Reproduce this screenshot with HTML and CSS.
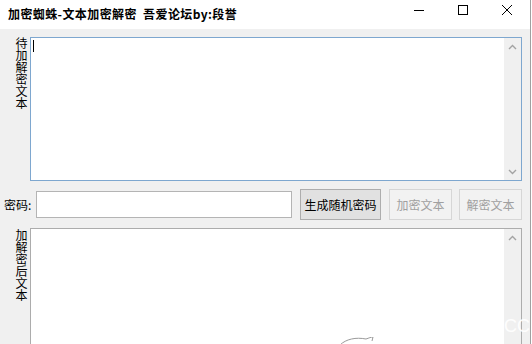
FILE: index.html
```html
<!DOCTYPE html>
<html lang="zh">
<head>
<meta charset="utf-8">
<title>加密蜘蛛</title>
<link rel="stylesheet" href="styles.css">
</head>
<body>
<div class="window">
  <div class="titlebar">
    <div class="title">加密蜘蛛-文本加密解密&nbsp;&nbsp;吾爱论坛by:段誉</div>
    <div class="caps">
      <div class="cap"><svg width="10" height="10" viewBox="0 0 10 10"><path d="M0 5.5H10" stroke="#000" stroke-width="1"/></svg></div>
      <div class="cap"><svg width="10" height="10" viewBox="0 0 10 10"><rect x="0.5" y="0.5" width="9" height="9" fill="none" stroke="#000" stroke-width="1"/></svg></div>
      <div class="cap"><svg width="10" height="10" viewBox="0 0 10 10"><path d="M0 0L10 10M10 0L0 10" stroke="#000" stroke-width="1"/></svg></div>
    </div>
  </div>
  <div class="client">
    <div class="pane pane-top">
      <div class="vlabel">待加解密文本</div>
      <div class="textbox focused">
        <div class="text-area"><span class="caret"></span></div>
        <div class="scrollbar">
          <div class="arrow"><svg width="9" height="6" viewBox="0 0 9 6"><path d="M1 5L4.5 1.5L8 5" fill="none" stroke="#a3a3a3" stroke-width="1.4"/></svg></div>
          <div class="track"></div>
          <div class="arrow"><svg width="9" height="6" viewBox="0 0 9 6"><path d="M1 1L4.5 4.5L8 1" fill="none" stroke="#a3a3a3" stroke-width="1.4"/></svg></div>
        </div>
      </div>
    </div>
    <div class="pwd-row">
      <div class="pwd-label">密码:</div>
      <div class="input"></div>
      <div class="btn btn-main">生成随机密码</div>
      <div class="btn btn-off btn-enc">加密文本</div>
      <div class="btn btn-off">解密文本</div>
    </div>
    <div class="pane pane-bottom">
      <div class="vlabel">加解密后文本</div>
      <div class="textbox plain">
        <div class="text-area"></div>
        <div class="scrollbar">
          <div class="arrow"><svg width="9" height="6" viewBox="0 0 9 6"><path d="M1 5L4.5 1.5L8 5" fill="none" stroke="#a3a3a3" stroke-width="1.4"/></svg></div>
          <div class="track"></div>
        </div>
      </div>
    </div>
  </div>
</div>
<div class="wm-text">CC</div>
<svg class="wm-logo" width="40" height="8" viewBox="0 0 40 8"><path d="M2 8C8 2 18 0 28 2C31 1 33 0 35 0L34 4" fill="none" stroke="#9a9a9a" stroke-width="1"/></svg>
</body>
</html>
```
FILE: styles.css
```css
html, body {
  margin: 0;
  padding: 0;
  background: #ffffff;
  width: 532px;
  height: 344px;
  overflow: hidden;
  font-family: "Noto Sans CJK SC", "Noto Sans", sans-serif;
  position: relative;
}

.window {
  width: 530px;
  height: 344px;
  border-right: 1px solid #a0a0a0;
  display: flex;
  flex-direction: column;
  overflow: hidden;
}

.titlebar {
  height: 29px;
  background: #ffffff;
  display: flex;
  flex: none;
}

.title {
  padding: 5px 0 0 8px;
  font-size: 12px;
  font-weight: bold;
  line-height: 18px;
  color: #000;
  letter-spacing: 0.4px;
}

.caps {
  margin-left: auto;
  margin-right: 1px;
  display: flex;
}

.cap {
  width: 44px;
  height: 19px;
  display: flex;
  align-items: center;
  justify-content: center;
}

.cap svg { display: block; }

.client {
  flex: 1;
  background: #f0f0f0;
  padding: 8px 8px 0 0;
  display: flex;
  flex-direction: column;
  gap: 8px;
  min-height: 0;
}

.pane {
  display: flex;
}

.pane-top { height: 144px; flex: none; }
.pane-bottom { flex: 1; min-height: 0; }

.vlabel {
  writing-mode: vertical-rl;
  font-size: 12px;
  line-height: 14px;
  width: 14px;
  margin-left: 14px;
  margin-right: 2px;
  color: #000;
  padding-top: 0;
}

.pane-bottom .vlabel { padding-top: 1px; }

.textbox {
  width: 492px;
  box-sizing: border-box;
  background: #ffffff;
  display: flex;
}

.textbox.focused { border: 1px solid #7ea7cf; }
.textbox.plain { border: 1px solid #acacac; border-bottom: none; height: 130px; }

.text-area {
  flex: 1;
  position: relative;
}

.caret {
  display: block;
  width: 1px;
  height: 12px;
  background: #000;
  margin: 2px 0 0 2px;
}

.scrollbar {
  width: 17px;
  background: #f0f0f0;
  display: flex;
  flex-direction: column;
}

.arrow {
  height: 17px;
  display: flex;
  align-items: center;
  justify-content: center;
}

.arrow svg { display: block; }

.track { flex: 1; }

.pwd-row {
  display: flex;
  align-items: center;
  height: 31px;
  padding-left: 4px;
  flex: none;
}

.pwd-label {
  width: 32px;
  font-size: 12px;
  line-height: 14px;
  color: #000;
  padding-top: 1px;
}

.input {
  width: 256px;
  height: 27px;
  box-sizing: border-box;
  border: 1px solid #b4b4b4;
  background: #ffffff;
  margin-right: 8px;
}

.btn {
  height: 31px;
  box-sizing: border-box;
  display: flex;
  align-items: center;
  justify-content: center;
  font-size: 12px;
  white-space: nowrap;
}

.btn-main {
  width: 81px;
  background: #e1e1e1;
  border: 1px solid #adadad;
  color: #000;
  margin-right: 8px;
}

.btn-off {
  width: 63px;
  background: #f2f2f2;
  border: 1px solid #d6d6d6;
  color: #a0a0a0;
}

.btn-enc { margin-right: 7px; }

.wm-text {
  position: absolute;
  left: 504px;
  top: 316px;
  font-family: "Liberation Sans", sans-serif;
  font-size: 18px;
  line-height: 20px;
  color: rgba(255, 255, 255, 0.92);
}

.wm-logo {
  position: absolute;
  left: 338px;
  top: 337px;
}
```
